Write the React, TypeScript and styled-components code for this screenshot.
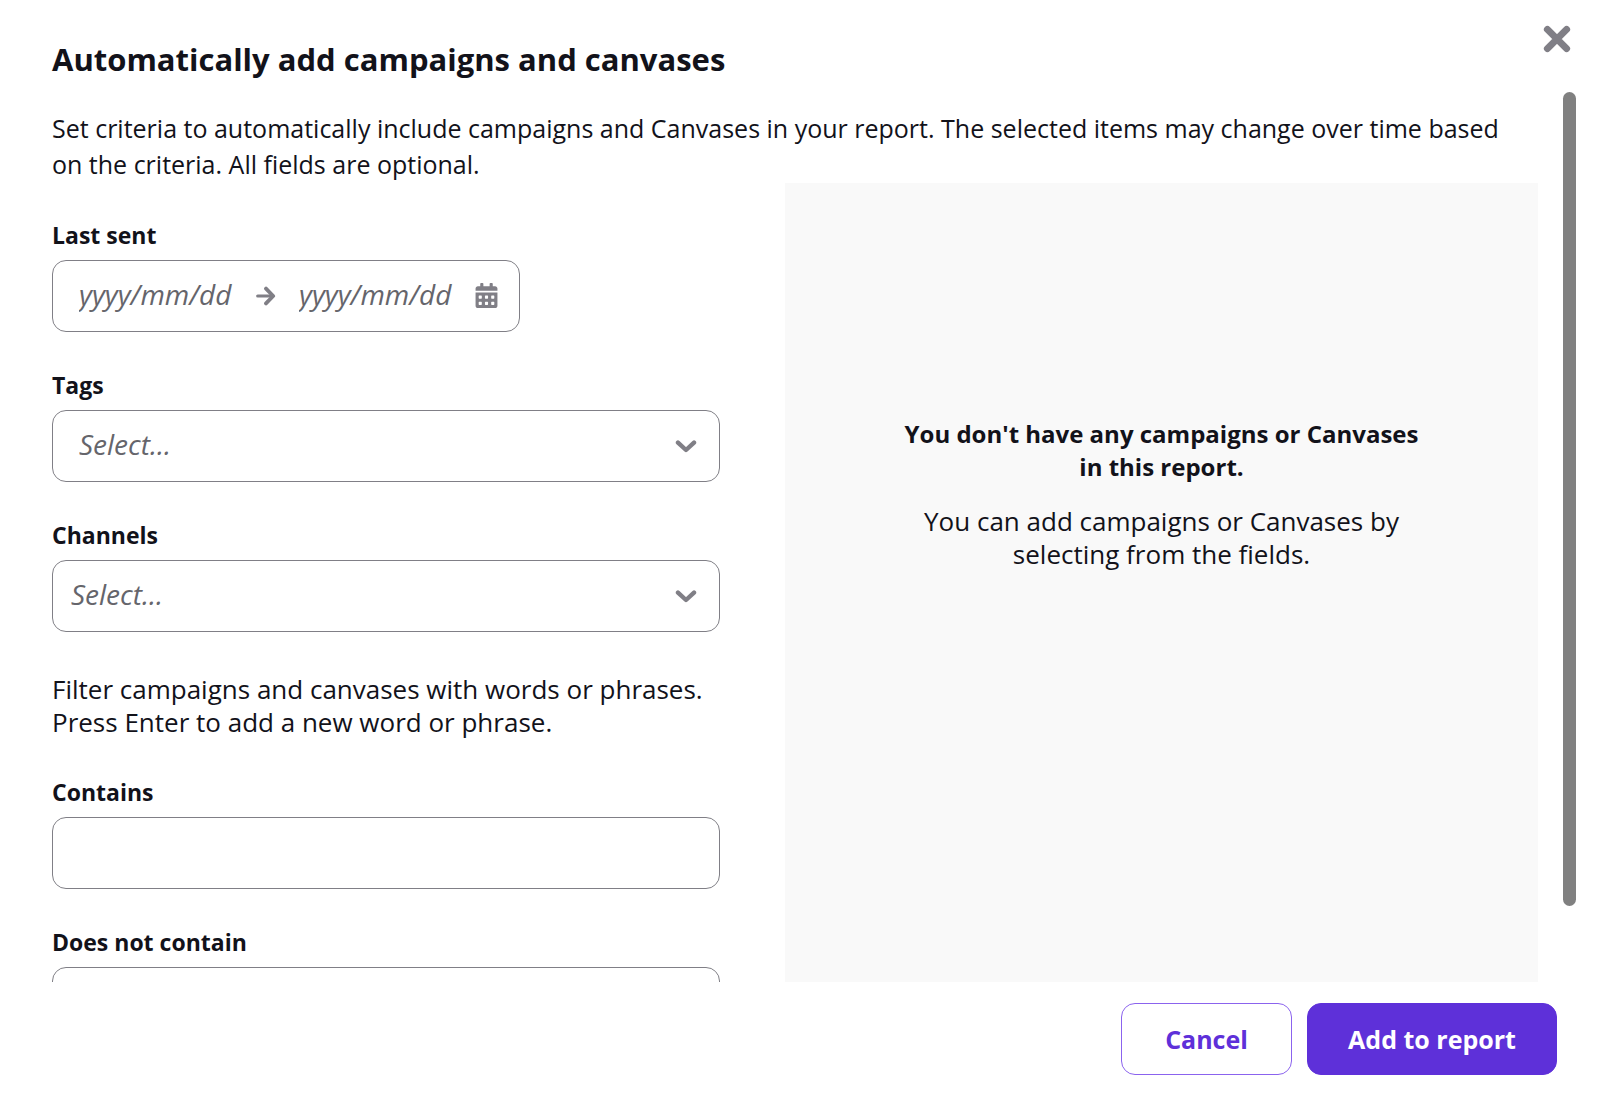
import React, { useCallback, useEffect, useRef, useState } from "react";
import styled, { createGlobalStyle, css } from "styled-components";
import { FaCalendarAlt } from "react-icons/fa";

const ink = "#12121a";
const muted = "#65656b";
const iconGray = "#807f86";
const violet = "#5e30d9";

const GlobalStyle = createGlobalStyle`
  *, *::before, *::after { box-sizing: border-box; }
  body {
    margin: 0;
    background: #fff;
    color: ${ink};
    font-family: "Open Sans", "Noto Sans", sans-serif;
  }
`;

const Dialog = styled.section`
  display: flex;
  flex-direction: column;
  height: 100vh;
`;

const Header = styled.header`
  display: flex;
  justify-content: space-between;
  align-items: flex-start;
  height: 92px;
  padding: 25px 33px 0 52px;
  flex: none;
`;

const Title = styled.h2`
  margin: 0;
  padding-top: 14px;
  font-size: 31px;
  line-height: 40px;
  font-weight: 700;
`;

const CloseButton = styled.button`
  display: flex;
  padding: 0;
  border: 0;
  background: none;
  color: ${iconGray};
  cursor: pointer;
`;

const Body = styled.div`
  display: flex;
  flex: 1;
  min-height: 0;
`;

const ScrollArea = styled.div`
  flex: 1;
  overflow-y: auto;
  padding: 18px 25px 26px 52px;
  scrollbar-width: none;
`;

const Rail = styled.div`
  flex: none;
  width: 13px;
  margin-right: 28px;
`;

const Thumb = styled.div`
  width: 13px;
  border-radius: 7px;
  background: #808080;
`;

const Intro = styled.p`
  margin: 0 0 1px;
  padding-right: 24px;
  font-size: 25px;
  line-height: 36px;
`;

const Columns = styled.div`
  display: grid;
  grid-template-columns: 668fr 753fr;
  gap: 65px;
`;

const Form = styled.form`
  display: flex;
  flex-direction: column;
  gap: 37px;
  padding-top: 36px;
`;

const Field = styled.div`
  display: flex;
  flex-direction: column;
  gap: 9px;
`;

const Label = styled.label`
  font-size: 23px;
  line-height: 32px;
  font-weight: 700;
`;

const frame = css`
  height: 72px;
  border: 1px solid ${iconGray};
  border-radius: 14px;
  background: #fff;
`;

const placeholderText = css`
  color: ${muted};
  font-family: inherit;
  font-size: 28px;
  font-style: italic;
`;

const DateRange = styled.div`
  ${frame}
  display: flex;
  align-items: center;
  align-self: flex-start;
  padding: 0 20px 2px 26px;
  color: ${iconGray};
`;

const DateInput = styled.input`
  width: 175px;
  padding: 0 0 2px;
  border: 0;
  outline: 0;
  background: none;
  font-family: inherit;
  font-size: 28px;
  &::placeholder { ${placeholderText} opacity: 1; }
`;

const ArrowSlot = styled.span`
  display: flex;
  width: 45px;
  padding: 2px 0 0 2px;
`;

const SelectFrame = styled.div`
  ${frame}
  display: grid;
  align-items: center;
  color: ${iconGray};
  & > * { grid-area: 1 / 1; }
  & > svg { justify-self: end; margin-right: 22px; pointer-events: none; }
`;

const Select = styled.select<{ $inset: number }>`
  ${placeholderText}
  appearance: none;
  width: 100%;
  height: 100%;
  padding: 0 60px 4px ${(p) => p.$inset}px;
  border: 0;
  border-radius: 14px;
  background: none;
`;

const TextInput = styled.input`
  ${frame}
  width: 100%;
  padding: 0 26px;
  color: ${ink};
  font-family: inherit;
  font-size: 25px;
`;

const Help = styled.p`
  margin: 0;
  padding-top: 4px;
  font-size: 26px;
  line-height: 33px;
`;

const Preview = styled.aside`
  padding: 234px 112px 0;
  margin-bottom: -26px;
  background: #f9f9f9;
  text-align: center;
  line-height: 33px;
`;

const EmptyTitle = styled.h3`
  margin: 0 0 22px;
  font-size: 24px;
  font-weight: 700;
`;

const EmptyText = styled.p`
  margin: 0;
  font-size: 26px;
`;

const Footer = styled.footer`
  display: flex;
  justify-content: flex-end;
  gap: 15px;
  flex: none;
  padding: 21px 47px 33px;
`;

const Button = styled.button<{ $primary?: boolean }>`
  height: 72px;
  min-width: ${(p) => (p.$primary ? 250 : 171)}px;
  border: 1px solid ${(p) => (p.$primary ? violet : "#8b63ee")};
  border-radius: 14px;
  background: ${(p) => (p.$primary ? violet : "#fff")};
  color: ${(p) => (p.$primary ? "#fff" : violet)};
  font-family: inherit;
  font-size: 25px;
  font-weight: 700;
  cursor: pointer;
`;

function CloseIcon() {
  return (
    <svg width="28" height="28" viewBox="0 0 28 28" fill="none" stroke="currentColor" strokeWidth="7" strokeLinecap="round" aria-hidden="true">
      <path d="M4.4 4.4 23.6 23.6M23.6 4.4 4.4 23.6" />
    </svg>
  );
}

function ArrowIcon() {
  return (
    <svg width="20" height="20" viewBox="0 0 20 20" fill="none" stroke="currentColor" strokeLinecap="round" strokeLinejoin="round" aria-hidden="true">
      <path d="M1.7 10H16" strokeWidth="3.2" />
      <path d="M10 2.6 17.2 10 10 17.4" strokeWidth="3.8" />
    </svg>
  );
}

function ChevronIcon() {
  return (
    <svg width="22" height="14" viewBox="0 0 22 14" fill="none" stroke="currentColor" strokeWidth="4.4" strokeLinecap="round" strokeLinejoin="round" aria-hidden="true">
      <path d="M3 3.6 11 11 19 3.6" />
    </svg>
  );
}

function SelectField({ id, label, inset }: { id: string; label: string; inset: number }) {
  return (
    <Field>
      <Label htmlFor={id}>{label}</Label>
      <SelectFrame>
        <Select id={id} $inset={inset} defaultValue="">
          <option value="">Select...</option>
        </Select>
        <ChevronIcon />
      </SelectFrame>
    </Field>
  );
}

function TextField({ id, label }: { id: string; label: string }) {
  return (
    <Field>
      <Label htmlFor={id}>{label}</Label>
      <TextInput id={id} type="text" />
    </Field>
  );
}

export default function App() {
  const area = useRef<HTMLDivElement>(null);
  const [thumb, setThumb] = useState({ height: 0, top: 0 });

  const measure = useCallback(() => {
    const el = area.current;
    if (!el) return;
    const ratio = el.clientHeight / el.scrollHeight;
    setThumb({
      height: Math.round(el.clientHeight * ratio),
      top: Math.round(el.scrollTop * ratio),
    });
  }, []);

  useEffect(() => {
    measure();
    window.addEventListener("resize", measure);
    return () => window.removeEventListener("resize", measure);
  }, [measure]);

  return (
    <>
      <GlobalStyle />
      <Dialog role="dialog" aria-labelledby="dialog-title">
        <Header>
          <Title id="dialog-title">Automatically add campaigns and canvases</Title>
          <CloseButton type="button" aria-label="Close">
            <CloseIcon />
          </CloseButton>
        </Header>
        <Body>
          <ScrollArea ref={area} onScroll={measure}>
            <Intro>
              Set criteria to automatically include campaigns and Canvases in your report. The
              selected items may change over time based on the criteria. All fields are optional.
            </Intro>
            <Columns>
              <Form id="criteria">
                <Field>
                  <Label htmlFor="sent-from">Last sent</Label>
                  <DateRange>
                    <DateInput id="sent-from" type="text" placeholder="yyyy/mm/dd" />
                    <ArrowSlot>
                      <ArrowIcon />
                    </ArrowSlot>
                    <DateInput type="text" aria-label="Last sent, end date" placeholder="yyyy/mm/dd" />
                    <FaCalendarAlt size={25} />
                  </DateRange>
                </Field>
                <SelectField id="tags" label="Tags" inset={26} />
                <SelectField id="channels" label="Channels" inset={18} />
                <Help>
                  Filter campaigns and canvases with words or phrases. Press Enter to add a new word
                  or phrase.
                </Help>
                <TextField id="contains" label="Contains" />
                <TextField id="excludes" label="Does not contain" />
              </Form>
              <Preview>
                <EmptyTitle>You don't have any campaigns or Canvases in this report.</EmptyTitle>
                <EmptyText>You can add campaigns or Canvases by selecting from the fields.</EmptyText>
              </Preview>
            </Columns>
          </ScrollArea>
          <Rail>
            <Thumb style={{ height: thumb.height, marginTop: thumb.top }} />
          </Rail>
        </Body>
        <Footer>
          <Button type="button">Cancel</Button>
          <Button type="submit" form="criteria" $primary>
            Add to report
          </Button>
        </Footer>
      </Dialog>
    </>
  );
}
